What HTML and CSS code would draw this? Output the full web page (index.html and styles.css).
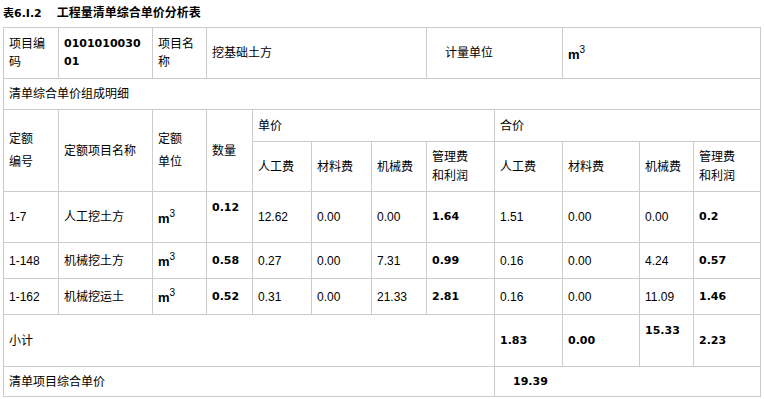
FILE: index.html
```html
<!DOCTYPE html>
<html lang="zh-CN">
<head>
<meta charset="utf-8">
<title>工程量清单综合单价分析表</title>
<link rel="stylesheet" href="styles.css">
</head>
<body>
<div class="title"><span class="tnum">表6.I.2</span>工程量清单综合单价分析表</div>
<table class="grid">
  <colgroup>
    <col style="width:55px"><col style="width:94px"><col style="width:54px"><col style="width:46px">
    <col style="width:59px"><col style="width:60px"><col style="width:55px"><col style="width:68px">
    <col style="width:68px"><col style="width:77px"><col style="width:54px"><col style="width:67px">
  </colgroup>
  <tr class="r1">
    <td>项目编码</td>
    <td class="b">0101010030<br>01</td>
    <td>项目名称</td>
    <td colspan="4">挖基础土方</td>
    <td colspan="2" class="indent">计量单位</td>
    <td colspan="3"><span class="m">m<sup>3</sup></span></td>
  </tr>
  <tr class="r2">
    <td colspan="12">清单综合单价组成明细</td>
  </tr>
  <tr class="r3">
    <td rowspan="2" class="tall"><span class="ln">定额</span><span class="ln">编号</span></td>
    <td rowspan="2">定额项目名称</td>
    <td rowspan="2" class="tall"><span class="ln">定额</span><span class="ln">单位</span></td>
    <td rowspan="2">数量</td>
    <td colspan="4">单价</td>
    <td colspan="4">合价</td>
  </tr>
  <tr class="r4">
    <td>人工费</td>
    <td>材料费</td>
    <td>机械费</td>
    <td class="two">管理费<br>和利润</td>
    <td>人工费</td>
    <td>材料费</td>
    <td>机械费</td>
    <td class="two">管理费<br>和利润</td>
  </tr>
  <tr class="r5">
    <td>1-7</td>
    <td>人工挖土方</td>
    <td><span class="m">m<sup>3</sup></span></td>
    <td class="b top">0.12</td>
    <td>12.62</td>
    <td>0.00</td>
    <td>0.00</td>
    <td class="b">1.64</td>
    <td>1.51</td>
    <td>0.00</td>
    <td>0.00</td>
    <td class="b">0.2</td>
  </tr>
  <tr class="r6">
    <td>1-148</td>
    <td>机械挖土方</td>
    <td><span class="m">m<sup>3</sup></span></td>
    <td class="b">0.58</td>
    <td>0.27</td>
    <td>0.00</td>
    <td>7.31</td>
    <td class="b">0.99</td>
    <td>0.16</td>
    <td>0.00</td>
    <td>4.24</td>
    <td class="b">0.57</td>
  </tr>
  <tr class="r7">
    <td>1-162</td>
    <td>机械挖运土</td>
    <td><span class="m">m<sup>3</sup></span></td>
    <td class="b">0.52</td>
    <td>0.31</td>
    <td>0.00</td>
    <td>21.33</td>
    <td class="b">2.81</td>
    <td>0.16</td>
    <td>0.00</td>
    <td>11.09</td>
    <td class="b">1.46</td>
  </tr>
  <tr class="r8">
    <td colspan="8">小计</td>
    <td class="b">1.83</td>
    <td class="b">0.00</td>
    <td class="b top">15.33</td>
    <td class="b">2.23</td>
  </tr>
  <tr class="r9">
    <td colspan="8">清单项目综合单价</td>
    <td colspan="4" class="b indent">19.39</td>
  </tr>
</table>
</body>
</html>
```
FILE: styles.css
```css
body {
  margin: 0;
  padding: 0 4px 0 3px;
  background: #fff;
  color: #000;
  font-family: "Liberation Sans", "Noto Sans CJK SC", sans-serif;
  font-size: 12px;
}

.title {
  font-weight: bold;
  line-height: 18px;
  padding-top: 4px;
  height: 23px;
  white-space: nowrap;
}

.tnum {
  font-family: "DejaVu Sans", "Noto Sans CJK SC", sans-serif;
  font-size: 11px;
  margin-right: 15px;
}

.tnum::first-letter {
  font-size: 12px;
}

.grid {
  border-collapse: collapse;
  table-layout: fixed;
  width: 758px;
}

.grid td {
  border: 1px solid #cccccc;
  padding: 0 5px;
  vertical-align: middle;
  text-align: left;
  line-height: 18px;
  overflow: hidden;
}

.r1 { height: 51px; }
.r2 { height: 31px; }
.r3 { height: 32px; }
.r4 { height: 50px; }
.r5 { height: 51px; }
.r6 { height: 36px; }
.r7 { height: 36px; }
.r8 { height: 52px; }
.r9 { height: 30px; }

.grid td.b {
  font-family: "DejaVu Sans", "Noto Sans CJK SC", sans-serif;
  font-weight: bold;
  font-size: 11px;
}

.grid td.top {
  vertical-align: top;
  padding-top: 7px;
}

.grid td.indent {
  padding-left: 18px;
}

.tall .ln {
  display: block;
  line-height: 23px;
}

.grid td.two {
  line-height: 19px;
}

.m {
  font-weight: bold;
  font-size: 13px;
  display: inline-block;
  padding-top: 3px;
}

.m sup {
  font-weight: normal;
  font-size: 10px;
  line-height: 0;
  vertical-align: 6px;
}
```
